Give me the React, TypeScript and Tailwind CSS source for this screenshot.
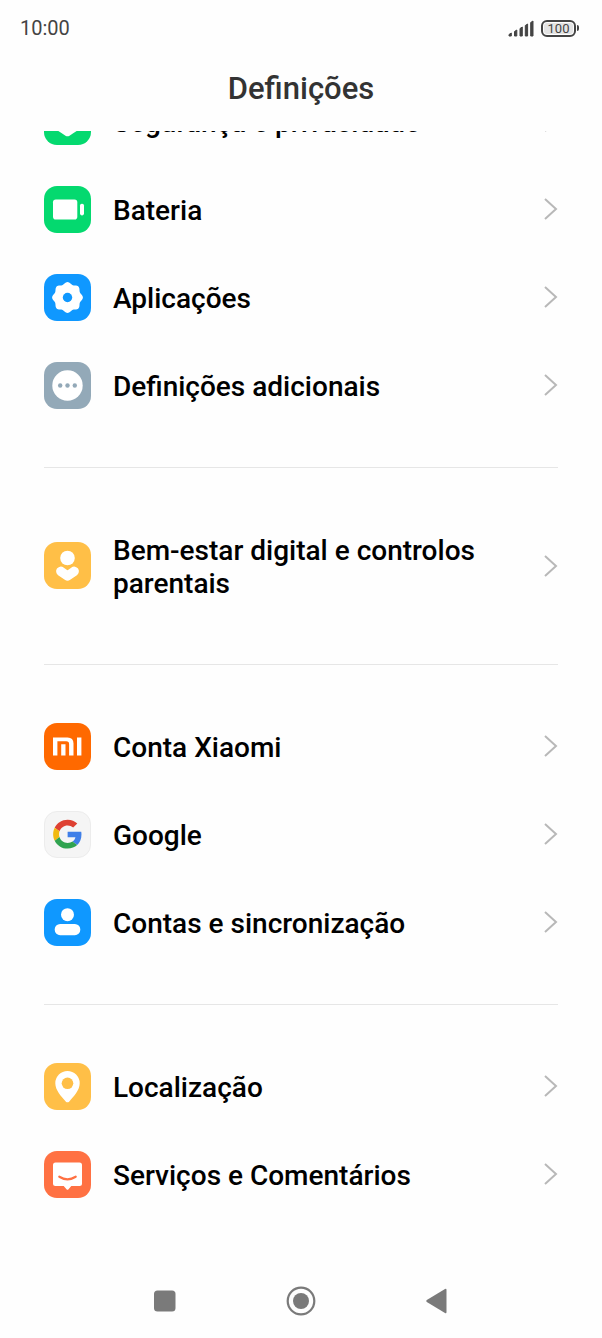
import type { ReactNode } from 'react'

type Item = {
  label: string
  color: string
  icon: ReactNode
}

function gearPath(): string {
  const points: string[] = []
  for (let deg = 0; deg < 360; deg += 3) {
    const t = (deg * Math.PI) / 180
    const r = 14.4 + Math.cos(8 * t)
    points.push(`${(23.5 + r * Math.cos(t)).toFixed(2)} ${(23.5 + r * Math.sin(t)).toFixed(2)}`)
  }
  return `M${points.join('L')}Z`
}

const GROUPS: Item[][] = [
  [
    {
      label: 'Segurança e privacidade',
      color: 'bg-[#04d96f]',
      icon: <path d="M23.5 7 37 12v14q0 3-3 6c-2.500 2-5.500 3.500-8.500 5.700q-2 1.300-4 0c-3-2.200-6-3.700-8.500-5.700q-3-3-3-6V12Z" />,
    },
    {
      label: 'Bateria',
      color: 'bg-[#04d96f]',
      icon: (
        <>
          <rect x="9" y="13.500" width="24.300" height="20" rx="2.800" />
          <rect x="36" y="17.800" width="4" height="11.600" rx="1.800" />
        </>
      ),
    },
    {
      label: 'Aplicações',
      color: 'bg-[#0f98ff]',
      icon: (
        <>
          <path d={gearPath()} />
          <circle cx="23.500" cy="23.500" r="4.700" fill="#0f98ff" />
        </>
      ),
    },
    {
      label: 'Definições adicionais',
      color: 'bg-[#93a9b8]',
      icon: (
        <>
          <circle cx="23.500" cy="23.500" r="15.200" />
          <g fill="#93a9b8">
            <circle cx="16.200" cy="23.500" r="2.200" />
            <circle cx="23.500" cy="23.500" r="2.200" />
            <circle cx="30.800" cy="23.500" r="2.200" />
          </g>
        </>
      ),
    },
  ],
  [
    {
      label: 'Bem-estar digital e controlos parentais',
      color: 'bg-[#ffbf47]',
      icon: (
        <>
          <circle cx="23.500" cy="16" r="7.300" />
          <path
            d="M16.800 29.300 23.500 34l6.700-4.700"
            fill="none"
            stroke="#fff"
            strokeWidth="9.400"
            strokeLinecap="round"
            strokeLinejoin="round"
          />
        </>
      ),
    },
  ],
  [
    {
      label: 'Conta Xiaomi',
      color: 'bg-[#ff6900]',
      icon: (
        <>
          <path d="M9 14.500h14.500q6 0 6 6v12h-4.400V21q0-2.800-2.800-2.800h-8.900v14.300H9Z" />
          <path d="M17.200 21.300h4.300v11.200h-4.300ZM33 14.500h4.400v18H33Z" />
        </>
      ),
    },
    {
      label: 'Google',
      color: 'bg-[#f5f5f5] border border-[#ececec]',
      icon: (
        <g transform="translate(8.500 8) scale(.63)">
          <path
            fill="#de4132"
            d="M24 9.500c3.540 0 6.710 1.220 9.210 3.600l6.850-6.850C35.900 2.380 30.470 0 24 0 14.620 0 6.510 5.380 2.560 13.220l7.980 6.190C12.430 13.720 17.740 9.500 24 9.500Z"
          />
          <path
            fill="#3f7fe8"
            d="M46.980 24.550c0-1.570-.15-3.090-.38-4.550H24v9.020h12.940c-.58 2.960-2.260 5.480-4.780 7.180l7.730 6c4.510-4.180 7.090-10.360 7.090-17.650Z"
          />
          <path
            fill="#f2b90f"
            d="M10.530 28.590c-.48-1.450-.76-2.990-.76-4.590s.27-3.140.76-4.590l-7.980-6.190C.92 16.460 0 20.120 0 24s.92 7.540 2.560 10.780l7.970-6.190Z"
          />
          <path
            fill="#30a350"
            d="M24 48c6.480 0 11.930-2.130 15.890-5.810l-7.730-6c-2.150 1.450-4.920 2.300-8.160 2.300-6.260 0-11.570-4.220-13.470-9.910l-7.980 6.190C6.510 42.620 14.620 48 24 48Z"
          />
        </g>
      ),
    },
    {
      label: 'Contas e sincronização',
      color: 'bg-[#0f98ff]',
      icon: (
        <>
          <circle cx="23.500" cy="15.700" r="6.500" />
          <rect x="10.700" y="25" width="25.600" height="11.200" rx="5.400" />
        </>
      ),
    },
  ],
  [
    {
      label: 'Localização',
      color: 'bg-[#ffbf47]',
      icon: (
        <>
          <path d="M23.500 8a12.200 12.200 0 0 0-12.200 12.200c0 7 6.200 13.500 10.400 18.200q1.800 1.800 3.600 0c4.200-4.700 10.400-11.200 10.400-18.200A12.200 12.200 0 0 0 23.500 8Z" />
          <circle cx="23.500" cy="20.300" r="5.800" fill="#ffbf47" />
        </>
      ),
    },
    {
      label: 'Serviços e Comentários',
      color: 'bg-[#ff7143]',
      icon: (
        <>
          <path d="M11.500 11.500h24q2.500 0 2.500 2.500v18.500q0 2.500-2.500 2.500H27.300l-2.800 3.300q-1 1-2 0L19.700 35h-8.200Q9 35 9 32.500V14q0-2.500 2.500-2.500Z" />
          <path
            d="M15.300 25.700q8.200 5.200 16.400 0"
            fill="none"
            stroke="#ff7143"
            strokeWidth="2.200"
            strokeLinecap="round"
          />
        </>
      ),
    },
  ],
]

function StatusBar() {
  return (
    <div className="flex h-14 items-center justify-between pl-5 pr-[23px] text-[#444]">
      <time className="text-xl">10:00</time>
      <div className="flex items-center gap-[7px]">
        <svg
          width="26"
          height="17"
          viewBox="0 0 26 17"
          fill="currentColor"
          stroke="currentColor"
          strokeLinejoin="round"
          aria-hidden="true"
        >
          <path d="M1 14.500 3.300 13v3H1ZM6.500 11.500 8.800 10v6H6.500ZM12 8.500 14.300 7v9H12ZM17.300 5.500 19.600 4v12h-2.300ZM22.700 2.500 25 1v15h-2.300Z" />
        </svg>
        <div className="flex items-center gap-px">
          <div className="h-[17px] w-[35px] rounded-[6px] border-2 border-[#444] p-px">
            <div className="flex h-full items-center justify-center rounded-[3px] bg-[#e4e4e4] text-[13px] leading-none">
              100
            </div>
          </div>
          <div className="h-[6px] w-[2px] rounded-r-sm bg-[#444]" />
        </div>
      </div>
    </div>
  )
}

function SettingsRow({ item, tall }: { item: Item; tall: boolean }) {
  return (
    <li>
      <a href="#" className={`flex items-center ${tall ? 'min-h-[121px]' : 'min-h-[88px]'}`}>
        <span className={`size-[47px] shrink-0 overflow-hidden rounded-[13px] ${item.color}`}>
          <svg viewBox="0 0 47 47" fill="#fff" className="size-full" aria-hidden="true">
            {item.icon}
          </svg>
        </span>
        <span className="ml-[22px] flex-1 pt-0.5 pr-12 text-[28px] leading-[33px] font-medium text-black">
          {item.label}
        </span>
        <svg
          width="14"
          height="22"
          viewBox="0 0 14 22"
          fill="none"
          stroke="#b8b8b8"
          strokeWidth="2"
          className="shrink-0"
          aria-hidden="true"
        >
          <path d="M1 1 12 11 1 21" />
        </svg>
      </a>
    </li>
  )
}

function NavBar() {
  return (
    <nav className="flex h-[74px] items-center justify-between px-[150px] text-[#7a7a7a]">
      <button type="button" aria-label="Recentes">
        <svg width="30" height="30" viewBox="0 0 30 30" fill="currentColor">
          <rect x="4" y="4.500" width="21.500" height="21" rx="3.500" />
        </svg>
      </button>
      <button type="button" aria-label="Início">
        <svg width="30" height="30" viewBox="0 0 30 30" fill="currentColor">
          <circle cx="15" cy="15" r="13.300" fill="none" stroke="currentColor" strokeWidth="2.200" />
          <circle cx="15" cy="15" r="8" />
        </svg>
      </button>
      <button type="button" aria-label="Voltar">
        <svg width="30" height="30" viewBox="0 0 30 30" fill="currentColor">
          <path d="M4.800 14q-1.300 1 0 2L23 27q1.500.7 1.500-1V4q0-1.700-1.500-1Z" />
        </svg>
      </button>
    </nav>
  )
}

export default function App() {
  return (
    <div className="flex min-h-screen flex-col bg-[#fefefe] font-['Roboto',sans-serif]">
      <StatusBar />
      <header className="flex h-[75px] items-start justify-center pt-[13px]">
        <h1 className="text-[31px] leading-10 font-medium text-[#333]">Definições</h1>
      </header>
      <main className="flex-1 overflow-hidden px-11">
        {/* the list is scrolled, so its first row is partly hidden under the title */}
        <div className="-mt-[54px]">
          {GROUPS.map((group, i) => (
            <section key={group[0].label}>
              {i > 0 ? <hr className="mt-[38px] mb-[37px] border-t border-[#e6e6e6]" /> : null}
              <ul>
                {group.map((item) => (
                  <SettingsRow key={item.label} item={item} tall={group.length === 1} />
                ))}
              </ul>
            </section>
          ))}
        </div>
      </main>
      <NavBar />
    </div>
  )
}
